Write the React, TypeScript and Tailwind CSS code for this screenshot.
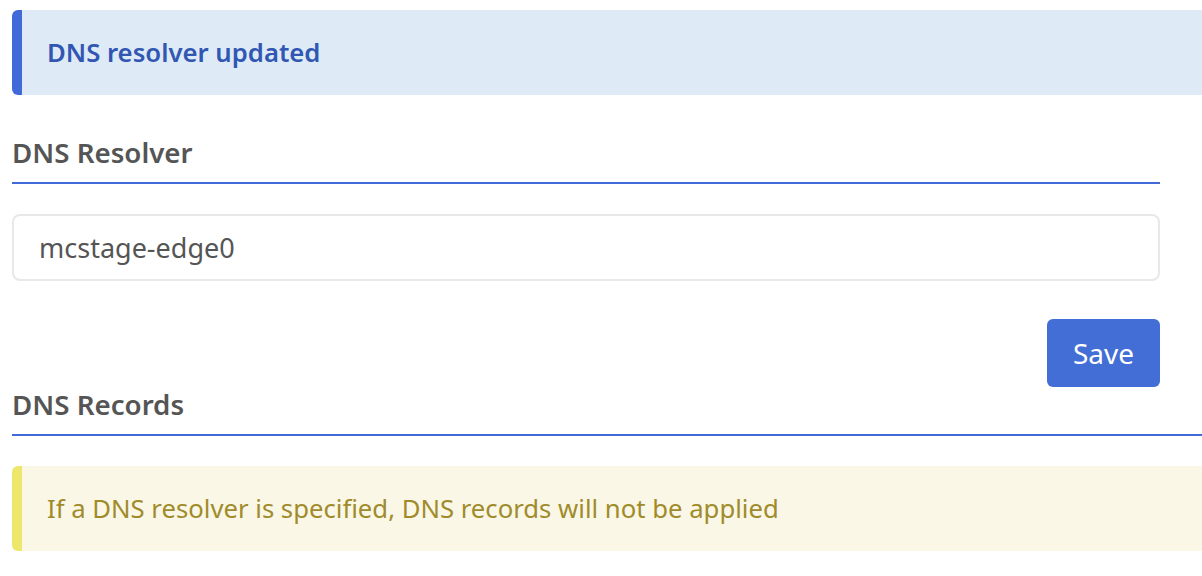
import React from 'react';

const App: React.FC = () => {
  return (
    <div
      className="min-h-[576px] bg-white pl-[12px] pt-[10px] overflow-hidden"
      style={{ fontFamily: '"Noto Sans", "Open Sans", sans-serif' }}
    >
      {/* 成功提示 */}
      <div className="flex h-[85px] items-center rounded-l-md border-l-[10px] border-[#4169d8] bg-[#deebf7] pl-[25px]">
        <span className="text-[25.7px] font-semibold leading-[36px] text-[#3157b3]">DNS resolver updated</span>
      </div>

      {/* DNS Resolver */}
      <div className="mr-[42px]">
        <h2 className="mt-[39px] border-b-2 border-[#4169d8] pb-[12px] text-[27.7px] font-semibold leading-[36px] text-[#555555]">
          DNS Resolver
        </h2>
        <input
          type="text"
          defaultValue="mcstage-edge0"
          className="mt-[30px] block h-[67px] w-full rounded-lg border-2 border-[#e8e8e8] bg-white pl-[25px] text-[27px] text-[#555555] outline-none"
        />
        <div className="mt-[38px] flex justify-end">
          <button className="h-[68px] w-[113px] rounded-md bg-[#436ed5] text-[28px] text-white">Save</button>
        </div>
      </div>

      {/* DNS Records */}
      <h2 className="-mt-px border-b-2 border-[#4169d8] pb-[12px] text-[27.7px] font-semibold leading-[36px] text-[#555555]">
        DNS Records
      </h2>
      <div className="mt-[30px] flex h-[85px] items-center rounded-l-md border-l-[10px] border-[#ede76b] bg-[#faf7e6] pl-[25px]">
        <span className="text-[25.7px] leading-[36px] text-[#a08b2b]">
          If a DNS resolver is specified, DNS records will not be applied
        </span>
      </div>
    </div>
  );
};

export default App;
